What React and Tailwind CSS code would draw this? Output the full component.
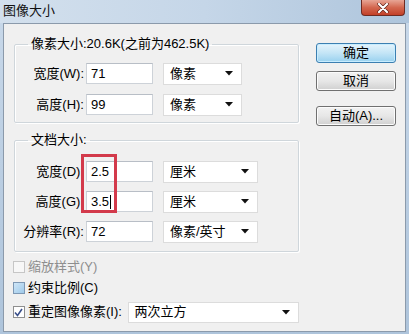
import React from 'react';

const font = "font-['Liberation_Sans','Noto_Sans_CJK_SC',sans-serif]";

const Arrow = () => (
  <svg width="8" height="5" viewBox="0 0 8 5" className="shrink-0">
    <path d="M0 0 H8 L4 4.5 Z" fill="#111" />
  </svg>
);

const Select = ({ text, w }) => (
  <div className={`${w} h-[22px] ml-[10px] flex items-center justify-between bg-white border border-[#dcdcdc] pl-[6px] pr-[8px] text-[13px]`}>
    <span>{text}</span>
    <Arrow />
  </div>
);

const Row = ({ label, value, unit, selW, caret }) => (
  <div className="flex items-center h-[21px]">
    <span className="w-[69px] text-right text-[13px] whitespace-nowrap">{label}</span>
    <div className="ml-[2px] w-[67px] h-[21px] flex items-center bg-white border border-[#cdd2d8] border-t-[#b8bec6] pl-[4px] text-[13px]">
      {value}
      {caret && <span className="w-px h-[14px] bg-black ml-px" />}
    </div>
    <Select text={unit} w={selW} />
  </div>
);

const Group = ({ title, children, className }) => (
  <fieldset className={`border border-[#cfd6db] rounded-[2px] shadow-[inset_1px_1px_0_#fff,1px_1px_0_#fff] ${className}`}>
    <legend className="ml-[13px] px-[3px] text-[13px] leading-[16px]">{title}</legend>
    {children}
  </fieldset>
);

const Btn = ({ children, primary, className }) => (
  <div
    className={`w-[80px] h-[20px] flex items-center justify-center rounded-[3px] border text-[13px] ${
      primary
        ? 'border-[#3c7fb1] bg-gradient-to-b from-[#e5f4fc] via-[#c4e5f6] to-[#98d1ef] shadow-[inset_0_0_0_1px_#c8edff]'
        : 'border-[#707070] bg-gradient-to-b from-[#f2f2f2] via-[#e7e7e7] to-[#d0d0d0] shadow-[inset_0_0_0_1px_#fcfcfc]'
    } ${className}`}
  >
    {children}
  </div>
);

export default function App() {
  return (
    <div className={`w-[409px] h-[334px] overflow-hidden flex flex-col bg-gradient-to-b from-[#c9d9ea] to-[#aec4db] text-black ${font}`}>
      {/* title bar */}
      <div className="h-[23px] flex items-start shrink-0 bg-gradient-to-r from-[#d3e0ed] via-[#c5d6e8] to-[#aec5dc]">
        <span className="ml-[3px] mt-[2px] text-[13px] leading-[17px] text-[#111]">图像大小</span>
        <div className="ml-auto mr-[4px] w-[44px] h-[16px] rounded-b-[4px] border border-t-0 border-[#6e2b22] bg-gradient-to-b from-[#e7a595] via-[#d3674f] to-[#c23f27] flex items-center justify-center">
          <svg width="12" height="10" viewBox="0 0 12 10">
            <path d="M2 1 L10 9 M10 1 L2 9" stroke="#5a1d14" strokeWidth="3.4" strokeLinecap="round" />
            <path d="M2 1 L10 9 M10 1 L2 9" stroke="#fff" strokeWidth="2.2" strokeLinecap="round" />
          </svg>
        </div>
      </div>

      {/* body */}
      <div className="ml-[3px] w-[403px] h-[309px] bg-[#f0f0f0] border border-[#8b9aab] flex">
        <div className="ml-[10px] w-[285px] flex flex-col">
          <Group title="像素大小:20.6K(之前为462.5K)" className="mt-[12px] pt-[11px] pb-[7px]">
            <div className="flex flex-col gap-[10px]">
              <Row label="宽度(W):" value="71" unit="像素" selW="w-[79px]" />
              <Row label="高度(H):" value="99" unit="像素" selW="w-[79px]" />
            </div>
          </Group>

          <Group title="文档大小:" className="relative mt-[9px] pt-[13px] pb-[9px]">
            <div className="flex flex-col gap-[9px]">
              <Row label="宽度(D):" value="2.5" unit="厘米" selW="w-[95px]" />
              <Row label="高度(G):" value="3.5" unit="厘米" selW="w-[95px]" caret />
              <Row label="分辨率(R):" value="72" unit="像素/英寸" selW="w-[95px]" />
            </div>
            <div className="absolute left-[66px] top-[6px] w-[36px] h-[59px] border-[3px] border-[#d33a4b]" />
          </Group>

          <div className="-ml-[1px] mt-[5px] flex flex-col text-[13px]">
            <label className="flex items-center h-[20px] text-[#8e8e8e]">
              <span className="w-[12px] h-[12px] border border-[#c6c6c6] bg-[#f7f7f7]" />
              <span className="ml-[3px]">缩放样式(Y)</span>
            </label>
            <label className="flex items-center h-[20px] mt-px">
              <span className="w-[12px] h-[12px] border border-[#7e98b4] bg-gradient-to-br from-[#cfe6f7] to-[#9fcaea]" />
              <span className="ml-[3px]">约束比例(C)</span>
            </label>
            <div className="flex items-center h-[20px] mt-[4px]">
              <span className="w-[12px] h-[12px] border border-[#8f8f8f] bg-white flex items-center justify-center">
                <svg width="9" height="9" viewBox="0 0 9 9">
                  <path d="M1 4.5 L3.5 7.5 L8 1" fill="none" stroke="#3a4f8a" strokeWidth="1.6" />
                </svg>
              </span>
              <span className="ml-[3px] w-[100px]">重定图像像素(I):</span>
              <div className="w-[172px] h-[21px] flex items-center justify-between bg-white border border-[#dcdcdc] pl-[6px] pr-[8px]">
                <span>两次立方</span>
                <Arrow />
              </div>
            </div>
          </div>
        </div>

        <div className="ml-[17px] pt-[19px] flex flex-col">
          <Btn primary>确定</Btn>
          <Btn className="mt-[8px]">取消</Btn>
          <Btn className="mt-[15px]">自动(A)...</Btn>
        </div>
      </div>
    </div>
  );
}
